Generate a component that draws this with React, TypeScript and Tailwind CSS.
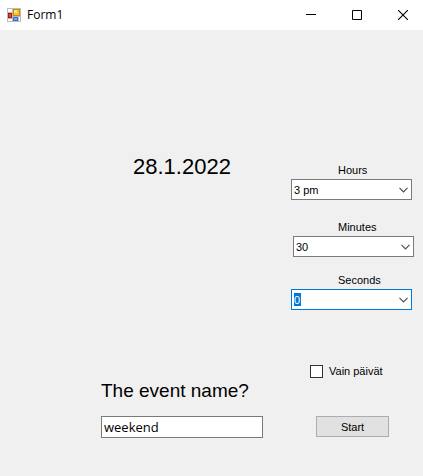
import type { ReactNode } from "react";

function AppIcon() {
  return (
    <svg width="14" height="14" viewBox="0 0 14 14" shapeRendering="crispEdges" aria-hidden="true">
      <rect width="14" height="14" fill="#bdbdbd" />
      <rect x="1" y="1" width="4" height="3" fill="#fff" />
      <rect x="1" y="11" width="4" height="2" fill="#fff" />
      <rect x="12" y="9" width="1" height="4" fill="#fff" />
      <rect x="1" y="5" width="4" height="5" fill="#a8160f" />
      <rect x="2" y="6" width="2" height="3" fill="#e0503f" />
      <rect x="6" y="1" width="7" height="7" fill="#c88a06" />
      <rect x="7" y="2" width="5" height="5" fill="#f7c52f" />
      <rect x="7" y="2" width="3" height="3" fill="#fde27c" />
      <rect x="6" y="9" width="5" height="4" fill="#3b6fd4" />
      <rect x="7" y="10" width="3" height="2" fill="#77a6f5" />
    </svg>
  );
}

function CaptionButton({ label, children }: { label: string; children: ReactNode }) {
  return (
    <button type="button" aria-label={label} className="flex h-full w-[46px] items-center justify-center hover:bg-gray-200">
      <svg width="10" height="10" viewBox="0 0 10 10" fill="none" stroke="#000" aria-hidden="true">
        {children}
      </svg>
    </button>
  );
}

type ComboProps = {
  id: string;
  label: string;
  value: string;
  options: string[];
  className?: string;
  boxClassName?: string;
  selectClassName?: string;
};

function Combo({
  id,
  label,
  value,
  options,
  className = "",
  boxClassName = "",
  selectClassName = "border-[#7a7a7a] bg-white",
}: ComboProps) {
  return (
    <div className={`flex flex-col gap-px ${className}`}>
      <label htmlFor={id} className="self-start pl-[47px]">
        {label}
      </label>
      <div className={`grid w-[121px] items-center ${boxClassName}`}>
        <select
          id={id}
          defaultValue={value}
          className={`col-start-1 row-start-1 h-[21px] w-full appearance-none border pl-[2px] outline-none ${selectClassName}`}
        >
          {options.map((option) => (
            <option key={option} className="bg-white text-black">
              {option}
            </option>
          ))}
        </select>
        <svg
          width="9"
          height="6"
          viewBox="0 0 9 6"
          fill="none"
          stroke="#505050"
          strokeWidth="1.2"
          className="pointer-events-none col-start-1 row-start-1 mr-1 justify-self-end"
          aria-hidden="true"
        >
          <path d="M.5 .8 4.5 4.8 8.5 .8" />
        </svg>
      </div>
    </div>
  );
}

export default function App() {
  return (
    <div className="flex min-h-screen flex-col bg-[#f0f0f0] font-['Liberation_Sans',Arial,sans-serif] text-[11px] leading-4 text-black">
      <header className="flex h-[30px] items-center justify-between bg-white">
        <div className="flex items-center gap-[6px] pl-[7px]">
          <AppIcon />
          <h1 className="font-['Open_Sans','Segoe_UI',sans-serif] text-[12px]">Form1</h1>
        </div>
        <div className="-mr-[3px] flex h-full overflow-hidden">
          <CaptionButton label="Minimize">
            <path d="M0 4.5h10" />
          </CaptionButton>
          <CaptionButton label="Maximize">
            <path d="M.5 .5h9v9h-9z" />
          </CaptionButton>
          <CaptionButton label="Close">
            <path d="M0 0 10 10M10 0 0 10" strokeWidth="1.1" />
          </CaptionButton>
        </div>
      </header>

      <form className="flex flex-1 justify-between pt-[125px]" onSubmit={(event) => event.preventDefault()}>
        <div className="flex flex-col pl-[101px]">
          <p className="pl-8 text-[22px] leading-6">28.1.2022</p>
          <label htmlFor="event-name" className="mt-[200px] text-[19px] leading-6">
            The event name?
          </label>
          <input
            id="event-name"
            type="text"
            defaultValue="weekend"
            className="mt-[13px] h-[22px] w-[162px] border border-[#7a7a7a] bg-white px-[2px] font-['Open_Sans','Segoe_UI',sans-serif] text-[13px] outline-none"
          />
        </div>

        <div className="flex w-[132px] flex-col pt-[7px]">
          <Combo id="hours" label="Hours" value="3 pm" options={["1 pm", "2 pm", "3 pm", "4 pm", "5 pm"]} />
          <Combo
            id="minutes"
            label="Minutes"
            value="30"
            options={["0", "15", "30", "45"]}
            className="mt-[19px]"
            boxClassName="ml-[2px]"
          />
          <Combo
            id="seconds"
            label="Seconds"
            value="0"
            options={["0", "15", "30", "45"]}
            className="mt-[15px]"
            selectClassName="border-[#0078d7] bg-white bg-[linear-gradient(#0078d7,#0078d7)] bg-[length:7px_13px] bg-[position:2px_3px] bg-no-repeat text-white"
          />
          <label className="mt-[53px] ml-[19px] flex items-center gap-[6px]">
            <input type="checkbox" className="size-[13px] appearance-none border border-[#333] bg-white checked:bg-[#0078d7]" />
            Vain päivät
          </label>
          <button type="submit" className="mt-[37px] ml-[25px] h-[21px] w-[73px] border border-[#adadad] bg-[#e1e1e1]">
            Start
          </button>
        </div>
      </form>
    </div>
  );
}
